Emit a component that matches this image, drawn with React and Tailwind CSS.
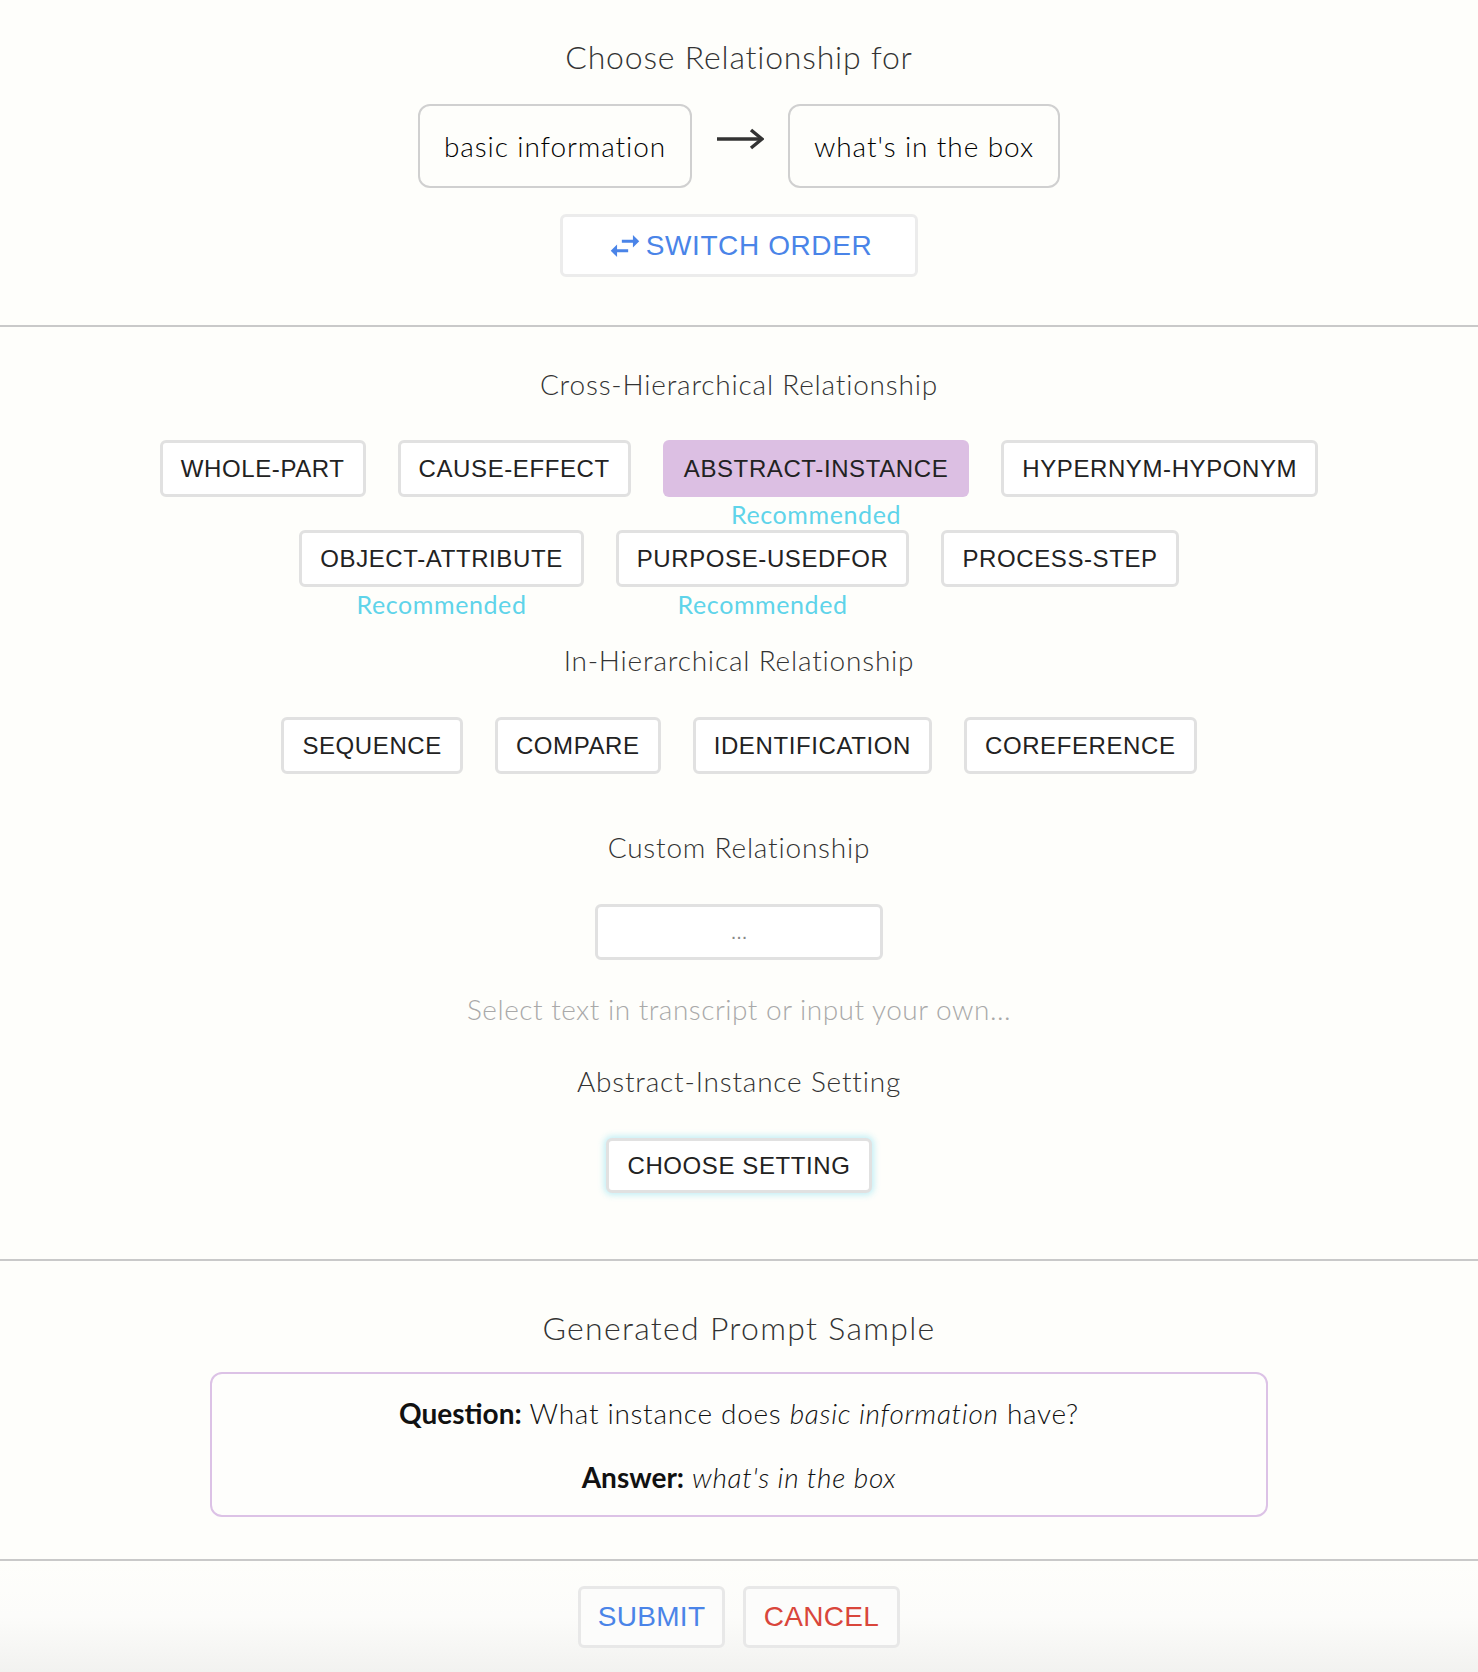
import React from "react";

const headFont = { fontFamily: "Lato, 'Open Sans', sans-serif" };

function SwapIcon() {
  return (
    <svg width="38" height="38" viewBox="0 0 24 24" fill="currentColor" className="mr-[2px]">
      <path d="M6.99 11L3 15l3.99 4v-3H14v-2H6.99v-3zM21 9l-3.99-4v3H10v2h7.01v3L21 9z" />
    </svg>
  );
}

function RelButton({ label, active, recommended }) {
  return (
    <div className="flex flex-col items-center">
      <button
        className={
          active
            ? "h-[57px] px-[21px] rounded-[6px] bg-[#dcbfe3] text-[#222] text-[24px] tracking-[0.6px] font-['Liberation_Sans',Arial,sans-serif]"
            : "h-[57px] px-[18px] rounded-[6px] border-[3px] border-[#e1e1e1] bg-white text-[#222] text-[24px] tracking-[0.6px] font-['Liberation_Sans',Arial,sans-serif]"
        }
      >
        {label}
      </button>
      {recommended && (
        <div className="mt-[2px] text-[25px] leading-[31px] tracking-[0.6px] text-[#5fd4ea] font-['Lato',sans-serif]">
          Recommended
        </div>
      )}
    </div>
  );
}

function Heading({ children, className = "" }) {
  return (
    <div className={"text-center text-[28px] leading-[32px] tracking-[0.8px] text-[#333] font-light " + className} style={headFont}>
      {children}
    </div>
  );
}

export default function App() {
  const row1 = [
    { label: "WHOLE-PART" },
    { label: "CAUSE-EFFECT" },
    { label: "ABSTRACT-INSTANCE", active: true, recommended: true },
    { label: "HYPERNYM-HYPONYM" },
  ];
  const row2 = [
    { label: "OBJECT-ATTRIBUTE", recommended: true },
    { label: "PURPOSE-USEDFOR", recommended: true },
    { label: "PROCESS-STEP" },
  ];
  const row3 = ["SEQUENCE", "COMPARE", "IDENTIFICATION", "COREFERENCE"];

  return (
    <div className="min-h-screen bg-[#fefefb] text-[#333]">
      {/* top: the pair of nodes */}
      <div className="pt-[39px] pb-[48px] flex flex-col items-center">
        <div className="text-[32px] leading-[36px] tracking-[0.8px] text-[#333] font-light" style={headFont}>
          Choose Relationship for
        </div>
        <div className="mt-[29px] flex items-center gap-[24px]">
          <div className="h-[84px] px-[24px] flex items-center rounded-[12px] border-2 border-[#d0d0d0] text-[28px] tracking-[0.9px] text-[#000] font-light" style={headFont}>
            basic information
          </div>
          <svg width="48" height="24" viewBox="0 0 48 24" fill="none" stroke="#333" strokeWidth="3.5" className="-mt-[14px]">
            <path d="M1 12 H45" />
            <path d="M35 3 L46 12 L35 21" />
          </svg>
          <div className="h-[84px] px-[24px] flex items-center rounded-[12px] border-2 border-[#d0d0d0] text-[28px] tracking-[0.9px] text-[#000] font-light" style={headFont}>
            what's in the box
          </div>
        </div>
        <button className="mt-[26px] h-[63px] w-[358px] flex items-center justify-center rounded-[6px] border-[3px] border-[#ececec] bg-white text-[#4a84e8] text-[28px] tracking-[0.6px] font-['Liberation_Sans',Arial,sans-serif]">
          <SwapIcon />
          SWITCH ORDER
        </button>
      </div>

      <div className="h-[2px] bg-[#c9c9c9]" />

      {/* relationship choices */}
      <div className="pt-[41px] pb-[66px] flex flex-col items-center">
        <Heading>Cross-Hierarchical Relationship</Heading>
        <div className="mt-[40px] flex items-start justify-center gap-[32px]">
          {row1.map((b) => (
            <RelButton key={b.label} {...b} />
          ))}
        </div>
        <div className="flex items-start justify-center gap-[32px]">
          {row2.map((b) => (
            <RelButton key={b.label} {...b} />
          ))}
        </div>

        <Heading className="mt-[24px]">In-Hierarchical Relationship</Heading>
        <div className="mt-[41px] flex items-start justify-center gap-[32px]">
          {row3.map((l) => (
            <RelButton key={l} label={l} />
          ))}
        </div>

        <Heading className="mt-[57px]">Custom Relationship</Heading>
        <input
          placeholder="..."
          className="mt-[41px] h-[56px] w-[288px] rounded-[6px] border-[3px] border-[#e1e1e1] bg-white text-center text-[20px] outline-none placeholder:text-[#888] font-['Liberation_Sans',Arial,sans-serif]"
        />
        <div className="mt-[33px] text-[28px] leading-[32px] tracking-[0.5px] text-[#a9a9a9] font-light" style={headFont}>
          Select text in transcript or input your own...
        </div>

        <Heading className="mt-[40px]">Abstract-Instance Setting</Heading>
        <button className="mt-[41px] h-[55px] px-[18px] rounded-[6px] border-[3px] border-[#e1e1e1] bg-white text-[#222] text-[24px] tracking-[0.6px] shadow-[0_0_6px_2px_rgba(120,220,240,0.45)] font-['Liberation_Sans',Arial,sans-serif]">
          CHOOSE SETTING
        </button>
      </div>

      <div className="h-[2px] bg-[#c9c9c9]" />

      {/* prompt preview */}
      <div className="pt-[49px] pb-[42px] flex flex-col items-center">
        <div className="text-[32px] leading-[36px] tracking-[1.3px] text-[#333] font-light" style={headFont}>
          Generated Prompt Sample
        </div>
        <div className="mt-[26px] w-[1058px] h-[145px] rounded-[12px] border-2 border-[#dcc2e6] bg-[#fefefc] flex flex-col items-center justify-center gap-[28px] text-[28px] leading-[36px] tracking-[0.7px] text-[#111]" style={headFont}>
          <p>
            <span className="font-bold tracking-[0px]">Question:</span>{" "}
            <span className="font-light">
              What instance does <i>basic information</i> have?
            </span>
          </p>
          <p>
            <span className="font-bold tracking-[0px]">Answer:</span>{" "}
            <i className="font-light">what's in the box</i>
          </p>
        </div>
      </div>

      <div className="h-[2px] bg-[#c9c9c9]" />

      {/* actions */}
      <div className="pt-[25px] pb-[24px] flex justify-center gap-[18px] bg-gradient-to-b from-[#fefefb] via-[#fcfcfa] to-[#f2f2f0]">
        <button className="h-[62px] w-[147px] rounded-[6px] border-[3px] border-[#e8e8e8] bg-[#fcfcfb] text-[28px] tracking-[0.3px] text-[#4a84e8] font-['Liberation_Sans',Arial,sans-serif]">
          SUBMIT
        </button>
        <button className="h-[62px] w-[157px] rounded-[6px] border-[3px] border-[#e8e8e8] bg-[#fcfcfb] text-[28px] tracking-[0.3px] text-[#d9463b] font-['Liberation_Sans',Arial,sans-serif]">
          CANCEL
        </button>
      </div>
    </div>
  );
}
